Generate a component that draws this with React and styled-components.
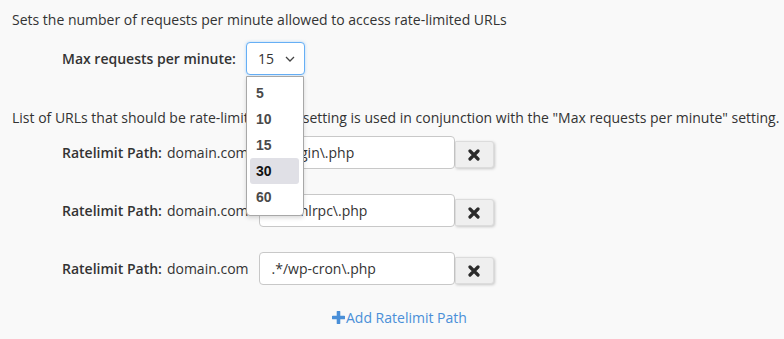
import React from "react";
import styled, { createGlobalStyle } from "styled-components";

const Global = createGlobalStyle`
  html, body { margin: 0; padding: 0; background: #f9f9f9; }
  body { font-family: "Open Sans", "Liberation Sans", sans-serif; font-size: 14px; color: #333; }
`;

const Page = styled.div`
  padding: 10px 12px 0 12px;
  width: 784px;
  box-sizing: border-box;
`;

const Para = styled.p`
  margin: ${(p) => p.$top || 0}px 0 0 0;
  line-height: 20px;
  white-space: nowrap;
`;

const Row = styled.div`
  display: flex;
  align-items: center;
  height: 33px;
  padding-left: 50px;
  margin-top: ${(p) => p.$top || 0}px;
`;

const Label = styled.span`
  font-weight: 600;
  margin-right: ${(p) => p.$gap || 5}px;
  white-space: nowrap;
`;

const Domain = styled.span`
  margin-right: 10px;
  white-space: nowrap;
`;

const SelectWrap = styled.div`
  position: relative;
`;

const SelectBox = styled.div`
  box-sizing: border-box;
  width: 59px;
  height: 33px;
  border: 1px solid #66aff5;
  border-radius: 4px;
  background: #fff;
  box-shadow: 0 0 3px rgba(102, 175, 245, 0.5);
  display: flex;
  align-items: center;
  justify-content: space-between;
  padding: 0 9px 0 11px;
`;

const Listbox = styled.ul`
  position: absolute;
  top: 34px;
  left: 0;
  width: 58px;
  box-sizing: border-box;
  margin: 0;
  padding: 3px 4px 5px 3px;
  list-style: none;
  background: #fff;
  border: 1px solid #a8a8a8;
  border-radius: 0 0 4px 4px;
  box-shadow: 0 2px 4px rgba(0, 0, 0, 0.15);
  z-index: 5;
`;

const Option = styled.li`
  height: 26px;
  line-height: 26px;
  padding-left: 6px;
  border-radius: 3px;
  font-family: "Liberation Sans", Arial, sans-serif;
  font-weight: 700;
  font-size: 14px;
  color: ${(p) => (p.$active ? "#111" : "#4a4a4a")};
  background: ${(p) => (p.$active ? "#e0e0e6" : "transparent")};
`;

const Input = styled.div`
  box-sizing: border-box;
  width: 196px;
  height: 33px;
  border: 1px solid #c8c8c8;
  border-radius: 4px;
  background: #fff;
  padding: 0 12px;
  display: flex;
  align-items: center;
  white-space: nowrap;
  overflow: hidden;
`;

const Field = styled.div`
  display: flex;
  align-items: flex-end;
  height: 33px;
`;

const RemoveButton = styled.button`
  box-sizing: border-box;
  width: 39px;
  height: 27px;
  margin-bottom: 1px;
  border: 1px solid #dcdcdc;
  border-radius: 0 3px 3px 0;
  background: #efefef;
  box-shadow: 1px 1px 3px rgba(0, 0, 0, 0.2);
  display: flex;
  align-items: center;
  justify-content: center;
  padding: 0;
`;

const AddLink = styled.a`
  display: flex;
  align-items: center;
  margin: 22px 0 0 320px;
  height: 20px;
  color: #4a8fd8;
  text-decoration: none;
  white-space: nowrap;
`;

const Chevron = () => (
  <svg width="10" height="6" viewBox="0 0 10 6">
    <path d="M1 1l4 4 4-4" fill="none" stroke="#444" strokeWidth="1.3" />
  </svg>
);

const Times = () => (
  <svg width="12" height="12" viewBox="0 0 12 12">
    <path d="M2 2L10 10M10 2L2 10" stroke="#2b2b2b" strokeWidth="3.2" strokeLinecap="round" />
  </svg>
);

const Plus = () => (
  <svg width="13" height="13" viewBox="0 0 13 13" style={{ marginRight: 1 }}>
    <path d="M6.5 1v11M1 6.5h11" stroke="#4a8fd8" strokeWidth="3.6" strokeLinecap="round" />
  </svg>
);

const paths = [".*/login\\.php", ".*/xmlrpc\\.php", ".*/wp-cron\\.php"];
const options = ["5", "10", "15", "30", "60"];

export default function App() {
  return (
    <Page>
      <Global />
      <Para>Sets the number of requests per minute allowed to access rate-limited URLs</Para>
      <Row $top={12}>
        <Label $gap={10}>Max requests per minute:</Label>
        <SelectWrap>
          <SelectBox>
            <span>15</span>
            <Chevron />
          </SelectBox>
          <Listbox>
            {options.map((o) => (
              <Option key={o} $active={o === "30"}>{o}</Option>
            ))}
          </Listbox>
        </SelectWrap>
      </Row>
      <Para $top={33}>
        List of URLs that should be rate-limited. This setting is used in conjunction with the "Max requests per minute" setting.
      </Para>
      {paths.map((p, i) => (
        <Row key={p} $top={i === 0 ? 8 : 25}>
          <Label>Ratelimit Path:</Label>
          <Domain>domain.com</Domain>
          <Field>
            <Input>{p}</Input>
            <RemoveButton aria-label="Remove">
              <Times />
            </RemoveButton>
          </Field>
        </Row>
      ))}
      <AddLink href="#">
        <Plus />
        Add Ratelimit Path
      </AddLink>
    </Page>
  );
}
